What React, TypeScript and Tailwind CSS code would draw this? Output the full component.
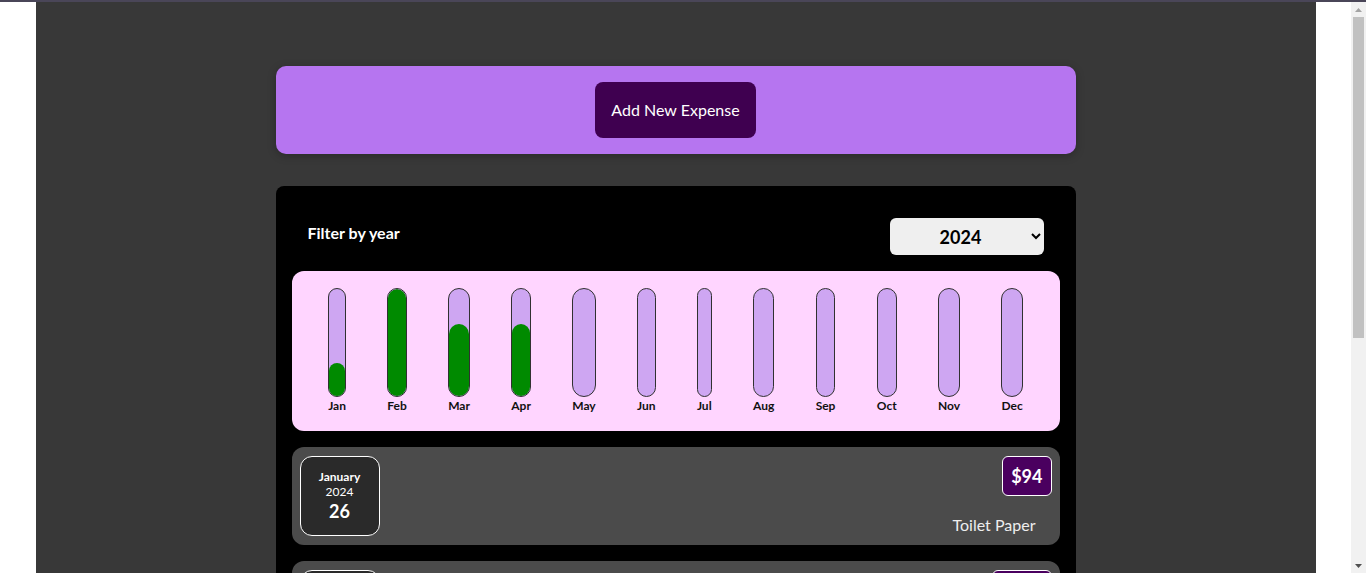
import { useState } from 'react';

type Expense = { id: string; title: string; amount: number; date: Date };

const expenses: Expense[] = [
  { id: 'e1', title: 'Toilet Paper', amount: 94, date: new Date(2024, 0, 26) },
  { id: 'e2', title: 'New TV', amount: 299, date: new Date(2024, 1, 12) },
  { id: 'e3', title: 'Car Insurance', amount: 199, date: new Date(2024, 2, 28) },
  { id: 'e4', title: 'New Desk (Wooden)', amount: 199, date: new Date(2024, 3, 12) },
];

const months = ['Jan', 'Feb', 'Mar', 'Apr', 'May', 'Jun', 'Jul', 'Aug', 'Sep', 'Oct', 'Nov', 'Dec'];

function ChartBar({ label, value, max }: { label: string; value: number; max: number }) {
  const fill = max > 0 ? Math.round((value / max) * 100) + '%' : '0%';
  return (
    <div className="flex h-full flex-col items-center">
      <div className="mt-px flex w-full grow flex-col justify-end overflow-hidden rounded-xl border border-[#313131] bg-[#cea6f2]">
        <div className="w-full rounded-t-xl bg-[#008a00]" style={{ height: fill }} />
      </div>
      <div className="text-center text-xs font-bold leading-[18px] text-[#111]">{label}</div>
    </div>
  );
}

function ExpenseItem({ expense }: { expense: Expense }) {
  const month = expense.date.toLocaleString('en-US', { month: 'long' });
  return (
    <div className="flex h-[98px] items-center justify-between rounded-xl bg-[#4b4b4b] p-2">
      <div className="flex h-20 w-20 flex-col items-center justify-center rounded-xl border border-white bg-[#2a2a2a] text-white">
        <div className="text-xs font-bold leading-[15px]">{month}</div>
        <div className="text-xs leading-[15px]">{expense.date.getFullYear()}</div>
        <div className="text-lg font-bold leading-[24px]">{expense.date.getDate()}</div>
      </div>
      <div className="flex h-full flex-col items-end justify-between">
        <div className="mt-px rounded-md border border-white bg-[#4a005f] px-2 py-[7px] text-lg font-bold leading-[24px] text-white">
          ${expense.amount}
        </div>
        <h2 className="pr-4 text-base leading-6 text-[#eee]">{expense.title}</h2>
      </div>
    </div>
  );
}

// classic browser scrollbar, drawn since the headless page hides it
function Scrollbar() {
  return (
    <div className="flex w-[15px] shrink-0 flex-col bg-[#f1f1f1]">
      <div className="flex h-[15px] items-center justify-center">
        <svg width="7" height="4" viewBox="0 0 7 4">
          <path d="M0 4 L3.5 0 L7 4 Z" fill="#a3a3a3" />
        </svg>
      </div>
      <div className="mx-[2px] h-[321px] bg-[#c1c1c1]" />
      <div className="grow" />
      <div className="flex h-[15px] items-center justify-center">
        <svg width="7" height="4" viewBox="0 0 7 4">
          <path d="M0 0 L7 0 L3.5 4 Z" fill="#505050" />
        </svg>
      </div>
    </div>
  );
}

export default function App() {
  const [year, setYear] = useState('2024');
  const filtered = expenses.filter((e) => e.date.getFullYear().toString() === year);
  const values = months.map((_, i) =>
    filtered.filter((e) => e.date.getMonth() === i).reduce((s, e) => s + e.amount, 0)
  );
  const max = Math.max(...values);

  return (
    <div className="flex h-[573px] border-t-2 border-[#4a4658] bg-white font-['Lato',sans-serif]">
      <div className="min-w-0 flex-1 overflow-hidden">
        <div className="mx-auto w-[1280px] bg-[#383838] pt-16 pb-16">
          <div className="mx-auto flex w-[800px] justify-center rounded-[10px] bg-[#b675f0] py-4 shadow-[0_2px_8px_rgba(0,0,0,0.25)]">
            <button className="rounded-lg bg-[#3f0050] px-4 py-4 text-base leading-6 text-white">
              Add New Expense
            </button>
          </div>

          <div className="mx-auto mt-8 w-[800px] rounded-lg bg-black p-4">
            <div className="flex items-center justify-between p-4">
              <label className="mb-2 text-base font-bold text-white">Filter by year</label>
              <select
                value={year}
                onChange={(e) => setYear(e.target.value)}
                className="h-[37px] w-[154px] rounded-md bg-[#efefef] text-center text-lg font-bold text-black"
              >
                <option value="2025">2025</option>
                <option value="2024">2024</option>
                <option value="2023">2023</option>
                <option value="2022">2022</option>
              </select>
            </div>

            <div className="flex h-40 justify-around rounded-xl bg-[#ffd5ff] p-4">
              {months.map((m, i) => (
                <ChartBar key={m} label={m} value={values[i]} max={max} />
              ))}
            </div>

            <ul className="mt-4 flex flex-col gap-4">
              {filtered.map((e) => (
                <li key={e.id}>
                  <ExpenseItem expense={e} />
                </li>
              ))}
            </ul>
          </div>
        </div>
      </div>
      <Scrollbar />
    </div>
  );
}
